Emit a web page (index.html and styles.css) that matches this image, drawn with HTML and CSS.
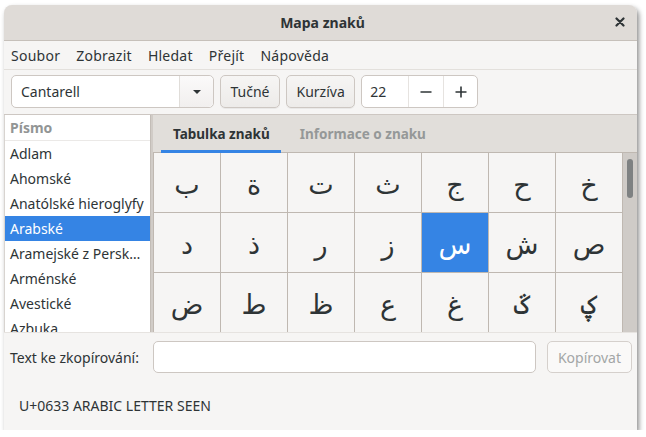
FILE: index.html
```html
<!DOCTYPE html>
<html lang="cs">
<head>
<meta charset="utf-8">
<title>Mapa znaků</title>
<link rel="stylesheet" href="styles.css">
</head>
<body>
<div class="window">
  <header class="titlebar">
    <span class="title">Mapa znaků</span>
    <span class="close"><svg width="10" height="10" viewBox="0 0 10 10"><path d="M1.5 1.5L8.5 8.5M8.5 1.5L1.5 8.5" stroke="#2e3436" stroke-width="2.2" stroke-linecap="round"/></svg></span>
  </header>
  <nav class="menubar">
    <span class="menu">Soubor</span>
    <span class="menu">Zobrazit</span>
    <span class="menu">Hledat</span>
    <span class="menu">Přejít</span>
    <span class="menu">Nápověda</span>
  </nav>
  <div class="toolbar">
    <div class="combo">
      <span class="combo-text">Cantarell</span>
      <span class="combo-btn"><svg width="10" height="6" viewBox="0 0 10 6"><path d="M1 1L9 1L5 5Z" fill="#2e3436"/></svg></span>
    </div>
    <span class="btn">Tučné</span>
    <span class="btn">Kurzíva</span>
    <div class="spin">
      <span class="spin-val">22</span>
      <span class="spin-btn"><svg width="12" height="12" viewBox="0 0 12 12"><path d="M0.5 6H11.5" stroke="#2e3436" stroke-width="1.6"/></svg></span>
      <span class="spin-btn"><svg width="12" height="12" viewBox="0 0 12 12"><path d="M0.5 6H11.5M6 0.5V11.5" stroke="#2e3436" stroke-width="1.6"/></svg></span>
    </div>
  </div>
  <div class="main">
    <div class="sidebar">
      <div class="list-head">Písmo</div>
      <div class="row">Adlam</div>
      <div class="row">Ahomské</div>
      <div class="row">Anatólské hieroglyfy</div>
      <div class="row selected">Arabské</div>
      <div class="row">Aramejské z Persk…</div>
      <div class="row">Arménské</div>
      <div class="row">Avestické</div>
      <div class="row">Azbuka</div>
    </div>
    <div class="sep"></div>
    <div class="panel">
      <div class="tabs">
        <span class="tab active">Tabulka znaků</span>
        <span class="tab">Informace o znaku</span>
      </div>
      <div class="gridwrap">
        <div class="grid">
          <div class="cell">ب</div>
          <div class="cell">ة</div>
          <div class="cell">ت</div>
          <div class="cell">ث</div>
          <div class="cell">ج</div>
          <div class="cell">ح</div>
          <div class="cell">خ</div>
          <div class="cell">د</div>
          <div class="cell">ذ</div>
          <div class="cell">ر</div>
          <div class="cell">ز</div>
          <div class="cell sel">س</div>
          <div class="cell">ش</div>
          <div class="cell">ص</div>
          <div class="cell">ض</div>
          <div class="cell">ط</div>
          <div class="cell">ظ</div>
          <div class="cell">ع</div>
          <div class="cell">غ</div>
          <div class="cell">ػ</div>
          <div class="cell">ؼ</div>
        </div>
        <div class="scrollbar"><div class="thumb"></div></div>
      </div>
    </div>
  </div>
  <div class="copyrow">
    <span class="copy-label">Text ke zkopírování:</span>
    <span class="entry"></span>
    <span class="btn disabled">Kopírovat</span>
  </div>
  <div class="status">U+0633 ARABIC LETTER SEEN</div>
</div>
</body>
</html>
```
FILE: styles.css
```css
* { box-sizing: border-box; }
html, body { margin: 0; padding: 0; background: #ffffff; }
body {
  font-family: "Noto Sans", "DejaVu Sans", sans-serif;
  font-size: 14px;
  color: #2e3436;
}
.window {
  margin: 5px 0 0 4px;
  width: 633px;
  height: 425px;
  background: #f6f5f4;
  border-radius: 8px 8px 0 0;
  box-shadow: 2px 3px 5px rgba(0,0,0,0.45);
  overflow: hidden;
  display: flex;
  flex-direction: column;
}
.titlebar {
  height: 36px;
  flex: none;
  background: #dfdbd7;
  border-bottom: 1px solid #c6c0ba;
  display: flex;
  align-items: center;
  justify-content: center;
  position: relative;
}
.title { font-weight: bold; font-size: 14px; margin-left: 4px; }
.close {
  position: absolute;
  right: 12px;
  top: 12px;
  width: 10px;
  height: 10px;
  display: flex;
}
.menubar {
  height: 29px;
  flex: none;
  border-bottom: 1px solid #e3e0dc;
  display: flex;
  align-items: center;
}
.menu { padding: 0 8px 0 7px; letter-spacing: 0.25px; }
.menu + .menu { margin-left: 1px; }
.toolbar {
  height: 45px;
  flex: none;
  border-bottom: 1px solid #cdc7c2;
  display: flex;
  align-items: flex-start;
  padding: 5px 0 0 7px;
  gap: 6px;
}
.combo {
  width: 203px;
  height: 33px;
  display: flex;
  background: #ffffff;
  border: 1px solid #cdc7c2;
  border-radius: 5px;
}
.combo-text { flex: 1; padding-left: 9px; display: flex; align-items: center; }
.combo-btn {
  width: 34px;
  border-left: 1px solid #e0ddd9;
  display: flex;
  align-items: center;
  justify-content: center;
  background: linear-gradient(#fbfafa, #f1efee);
  border-radius: 0 5px 5px 0;
}
.btn {
  height: 33px;
  padding: 0 9.5px;
  display: inline-flex;
  align-items: center;
  border: 1px solid #cdc7c2;
  border-radius: 5px;
  background: linear-gradient(#f6f5f4, #edebe9);
  box-shadow: 0 1px 0 rgba(0,0,0,0.05);
}
.spin {
  width: 117px;
  height: 33px;
  display: flex;
  background: #ffffff;
  border: 1px solid #cdc7c2;
  border-radius: 5px;
}
.spin-val { width: 46px; padding-left: 8px; display: flex; align-items: center; }
.spin-btn {
  flex: 1;
  border-left: 1px solid #e6e3e0;
  display: flex;
  align-items: center;
  justify-content: center;
}
.main {
  height: 218px;
  flex: none;
  display: flex;
  border-bottom: 1px solid #e6e3e0;
}
.sidebar {
  width: 146px;
  flex: none;
  background: #ffffff;
  border-left: 1px solid #d8d4d0;
  overflow: hidden;
}
.list-head {
  height: 26px;
  padding-left: 5px;
  display: flex;
  align-items: center;
  font-weight: bold;
  color: #929595;
  border-bottom: 1px solid #ebe9e7;
}
.row {
  height: 25px;
  padding-left: 5px;
  display: flex;
  align-items: center;
  white-space: nowrap;
}
.row.selected { background: #3584e4; color: #ffffff; }
.sep {
  width: 3px;
  flex: none;
  background: #d1ccc7;
  border-left: 1px solid #c3bdb7;
}
.panel { flex: 1; display: flex; flex-direction: column; background: #e1deda; }
.tabs {
  height: 38px;
  flex: none;
  display: flex;
  align-items: stretch;
  padding-left: 8px;
  border-bottom: 1px solid #bfb8b1;
}
.tab {
  padding: 2px 11px 0 12px;
  display: flex;
  align-items: center;
  font-weight: bold;
  font-size: 13.5px;
  color: #959898;
  border-bottom: 3px solid transparent;
  margin-bottom: -1px;
  margin-right: 7px;
}
.tab.active { color: #2e3436; border-bottom-color: #3584e4; }
.gridwrap { flex: 1; display: flex; overflow: hidden; }
.grid {
  width: 470px;
  flex: none;
  display: grid;
  grid-template-columns: repeat(7, 66px);
  grid-auto-rows: 59px;
  gap: 1px;
  padding: 0 1px;
  background: #bfb8b1;
  align-content: start;
}
.cell {
  background: #f6f5f4;
  display: flex;
  align-items: center;
  justify-content: center;
  font-family: "DejaVu Sans", sans-serif;
  font-size: 27px;
  padding-top: 4px;
}
.cell.sel { background: #3584e4; color: #ffffff; }
.scrollbar {
  flex: 1;
  background: #cfcbc7;
  padding: 6px 0 0 4px;
}
.thumb {
  width: 6px;
  height: 39px;
  border-radius: 3px;
  background: #7e8182;
}
.copyrow {
  height: 48px;
  flex: none;
  display: flex;
  align-items: center;
  padding: 0 5px 0 6px;
}
.copy-label { width: 143px; flex: none; }
.entry {
  width: 383px;
  height: 32px;
  background: #ffffff;
  border: 1px solid #cdc7c2;
  border-radius: 5px;
}
.btn.disabled {
  margin-left: auto;
  height: 32px;
  color: #a3a6a6;
  background: #faf9f8;
  border-color: #d5d0cc;
  box-shadow: none;
  padding: 0 10px;
}
.status {
  padding: 15px 0 0 15px;
}
```
